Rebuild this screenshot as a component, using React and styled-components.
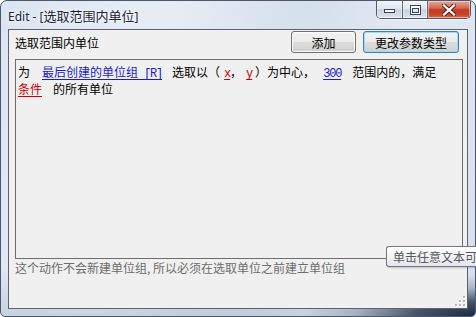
import React from 'react';
import styled, { createGlobalStyle } from 'styled-components';

const Global = createGlobalStyle`
  html, body { margin: 0; padding: 0; background: #ffffff; overflow: hidden; }
  body { font-family: "Noto Sans", "Noto Sans CJK SC", sans-serif; }
  #root { width: 476px; height: 317px; }
`;

const CJK = `"Noto Sans CJK SC", "Noto Sans", sans-serif`;

const Window = styled.div`
  position: relative;
  width: 476px;
  height: 317px;
  box-sizing: border-box;
  display: flex;
  flex-direction: column;
  padding: 0 7px 7px 7px;
  border: 1px solid #4a586a;
  border-radius: 7px 7px 5px 5px;
  background:
    radial-gradient(ellipse 170px 40px at 100% 100%, #1c2a40 0%, rgba(28,42,64,0.75) 35%, rgba(60,78,104,0.25) 70%, rgba(60,78,104,0) 100%),
    linear-gradient(180deg, rgba(255,255,255,0) 85%, rgba(150,165,185,0.35) 100%),
    linear-gradient(105deg, #dbe5f1 0%, #e6edf6 30%, #d5e0ed 55%, #e2e9f3 75%, #d6e0ec 100%);
`;

const TitleBar = styled.div`
  display: flex;
  align-items: center;
  height: 28px;
  margin: 0 -7px;
  padding-left: 7px;
`;

const Title = styled.div`
  flex: 1;
  font-family: "Noto Sans", ${CJK};
  font-size: 12px;
  color: #1b2533;
  text-shadow: 0 0 6px rgba(255,255,255,0.95), 0 0 2px rgba(255,255,255,0.9);
  white-space: nowrap;
`;

const TitleCJK = styled.span`
  font-family: ${CJK};
  font-size: 13px;
`;

const CaptionButtons = styled.div`
  align-self: flex-start;
  display: flex;
  height: 17px;
  margin-right: 4px;
  border: 1px solid #4f5a68;
  border-top: none;
  border-radius: 0 0 5px 5px;
  overflow: hidden;
  box-shadow: 0 1px 0 rgba(255,255,255,0.6);
`;

const CapBtn = styled.div`
  width: ${p => p.$w}px;
  display: flex;
  align-items: center;
  justify-content: center;
  box-sizing: border-box;
  border-left: ${p => (p.$first ? 'none' : '1px solid #5d6876')};
  background: ${p =>
    p.$close
      ? 'linear-gradient(180deg, #e9a493 0%, #d86a53 40%, #c23a22 52%, #c9442a 80%, #d96f50 100%)'
      : 'linear-gradient(180deg, #f0f4f8 0%, #dfe6ee 45%, #c9d3de 52%, #d4dde7 85%, #e2e9f1 100%)'};
  box-shadow: inset 0 0 0 1px rgba(255,255,255,0.45);
`;

const Client = styled.div`
  position: relative;
  flex: 1;
  display: flex;
  flex-direction: column;
  border: 1px solid #596372;
  background: #f0f0f0;
  padding: 1px 4px 0 6px;
  font-family: ${CJK};
  font-size: 12px;
  color: #000;
`;

const Header = styled.div`
  display: flex;
  align-items: center;
  height: 22px;
  padding-right: 4px;
`;

const Label = styled.div`
  flex: 1;
  font-size: 12px;
  color: #000;
`;

const Button = styled.button`
  height: 22px;
  width: ${p => p.$w}px;
  margin-left: ${p => p.$ml || 0}px;
  padding: 0;
  font-family: ${CJK};
  font-size: 12px;
  color: #000;
  border-radius: 3px;
  border: 1px solid ${p => (p.$default ? '#3c7fb1' : '#707070')};
  background: linear-gradient(180deg, #f2f2f2 0%, #ebebeb 49%, #dddddd 50%, #cfcfcf 100%);
  box-shadow: inset 0 0 0 1px ${p => (p.$default ? '#9fdcf6' : '#fcfcfc')};
`;

const Box = styled.div`
  margin-top: 6px;
  height: 200px;
  box-sizing: border-box;
  border: 1px solid #6e6e6e;
  background: #f0f0f0;
  padding: 3px 2px 0 2px;
  line-height: 17px;
  font-size: 12px;
  white-space: nowrap;
`;

const Line = styled.div`
  display: flex;
  align-items: baseline;
  height: 17px;
`;

const Seg = styled.span`
  margin-left: ${p => p.$ml || 0}px;
  color: ${p => (p.$kind === 'link' ? '#1a1acc' : p.$kind === 'param' ? '#cc0000' : '#000')};
  text-decoration: ${p => (p.$kind ? 'underline' : 'none')};
  text-underline-offset: 2px;
`;

const Ascii = styled.span`
  font-family: "Liberation Mono", monospace;
  font-size: 12px;
  letter-spacing: -1.2px;
`;

const Note = styled.div`
  line-height: 18px;
  font-size: 12px;
  color: #6d6d6d;
  white-space: nowrap;
`;

const Tooltip = styled.div`
  position: absolute;
  left: 377px;
  top: 216px;
  height: 21px;
  box-sizing: border-box;
  padding: 0 0 0 6px;
  display: flex;
  align-items: center;
  white-space: nowrap;
  font-size: 12px;
  color: #575757;
  border: 1px solid #767676;
  border-right: none;
  border-radius: 3px 0 0 3px;
  background: linear-gradient(180deg, #ffffff 0%, #e4e5f0 100%);
  box-shadow: 1px 1px 2px rgba(0,0,0,0.2);
`;

const Grip = styled.svg`
  position: absolute;
  right: 1px;
  bottom: 1px;
`;

const MinIcon = () => (
  <svg width="12" height="6" viewBox="0 0 12 6">
    <rect x="0.5" y="2.5" width="10" height="3" fill="#fff" stroke="#3b4452" />
  </svg>
);

const MaxIcon = () => (
  <svg width="11" height="10" viewBox="0 0 11 10">
    <rect x="0.5" y="0.5" width="10" height="9" fill="#fff" stroke="#3b4452" />
    <rect x="2.5" y="3.5" width="6" height="4" fill="#dfe5ec" stroke="#3b4452" />
  </svg>
);

const CloseIcon = () => (
  <svg width="14" height="12" viewBox="0 0 14 12">
    <path d="M2 1.5 L12 10.5 M12 1.5 L2 10.5" stroke="#5a2015" strokeWidth="4.2" strokeLinecap="square" />
    <path d="M2 1.5 L12 10.5 M12 1.5 L2 10.5" stroke="#ffffff" strokeWidth="2.3" strokeLinecap="square" />
  </svg>
);

export default function App() {
  return (
    <>
      <Global />
      <Window>
        <TitleBar>
          <Title>
            Edit - [<TitleCJK>选取范围内单位</TitleCJK>]
          </Title>
          <CaptionButtons>
            <CapBtn $w={25} $first>
              <MinIcon />
            </CapBtn>
            <CapBtn $w={25}>
              <MaxIcon />
            </CapBtn>
            <CapBtn $w={43} $close>
              <CloseIcon />
            </CapBtn>
          </CaptionButtons>
        </TitleBar>
        <Client>
          <Header>
            <Label>选取范围内单位</Label>
            <Button $w={65}>添加</Button>
            <Button $w={96} $ml={7} $default>更改参数类型</Button>
          </Header>
          <Box>
            <Line>
              <Seg>为</Seg>
              <Seg $ml={12} $kind="link">
                最后创建的单位组<Ascii> [R]</Ascii>
              </Seg>
              <Seg $ml={10}>选取以（</Seg>
              <Seg $ml={4} $kind="param">
                <Ascii>x</Ascii>
              </Seg>
              <Seg>，</Seg>
              <Seg $ml={4} $kind="param">
                <Ascii>y</Ascii>
              </Seg>
              <Seg $ml={3}>）为中心，</Seg>
              <Seg $ml={8} $kind="link">
                <Ascii>300</Ascii>
              </Seg>
              <Seg $ml={11}>范围内的，满足</Seg>
            </Line>
            <Line>
              <Seg $kind="param">条件</Seg>
              <Seg $ml={11}>的所有单位</Seg>
            </Line>
          </Box>
          <Note>这个动作不会新建单位组, 所以必须在选取单位之前建立单位组</Note>
          <Tooltip>单击任意文本可</Tooltip>
          <Grip width="12" height="12" viewBox="0 0 12 12">
            {[
              [9, 1],
              [9, 5], [5, 5],
              [9, 9], [5, 9], [1, 9],
            ].map(([x, y], i) => (
              <g key={i}>
                <rect x={x + 1} y={y + 1} width="2" height="2" fill="#ffffff" />
                <rect x={x} y={y} width="2" height="2" fill="#b8b8b8" />
              </g>
            ))}
          </Grip>
        </Client>
      </Window>
    </>
  );
}
